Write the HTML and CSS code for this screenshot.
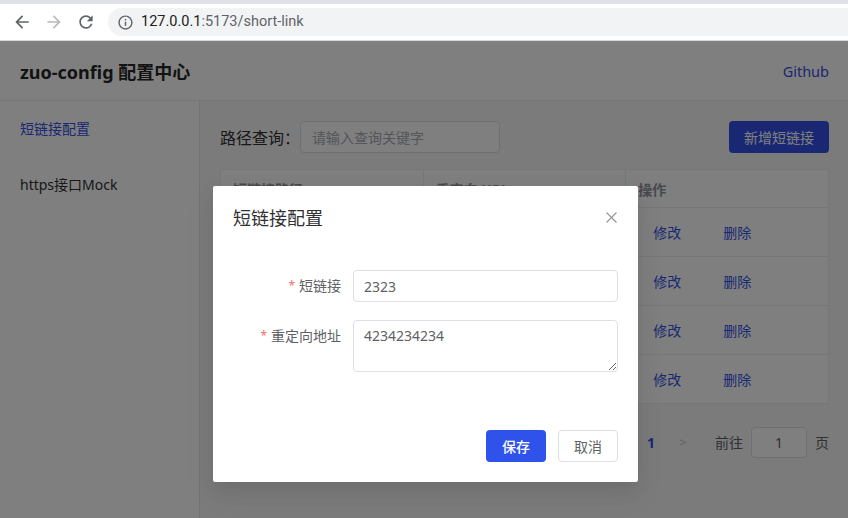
FILE: index.html
```html
<!DOCTYPE html>
<html lang="zh-CN">
<head>
<meta charset="utf-8">
<title>zuo-config</title>
<link rel="stylesheet" href="styles.css">
</head>
<body>
<div class="chrome">
  <div class="tabstrip"></div>
  <div class="toolbar">
    <span class="navbtn"><svg viewBox="0 0 24 24" width="20" height="20"><path fill="#5f6368" d="M20 11H7.83l5.59-5.59L12 4l-8 8 8 8 1.41-1.41L7.83 13H20v-2z"/></svg></span>
    <span class="navbtn"><svg viewBox="0 0 24 24" width="20" height="20"><path fill="#b9bbbe" d="M12 4l-1.41 1.41L16.17 11H4v2h12.17l-5.58 5.59L12 20l8-8z"/></svg></span>
    <span class="navbtn"><svg viewBox="0 0 24 24" width="20" height="20"><path fill="#5f6368" d="M17.65 6.35A7.958 7.958 0 0 0 12 4c-4.42 0-7.99 3.58-7.99 8s3.57 8 7.99 8c3.730 0 6.84-2.55 7.73-6h-2.08A5.99 5.99 0 0 1 12 18c-3.31 0-6-2.69-6-6s2.69-6 6-6c1.66 0 3.14.69 4.220 1.78L13 11h7V4l-2.35 2.35z"/></svg></span>
    <div class="omnibox">
      <svg class="info" viewBox="0 0 24 24" width="17" height="17"><path fill="#5f6368" d="M11 7h2v2h-2zm0 4h2v6h-2zm1-9C6.48 2 2 6.48 2 12s4.48 10 10 10 10-4.48 10-10S17.52 2 12 2zm0 18c-4.41 0-8-3.59-8-8s3.59-8 8-8 8 3.59 8 8-3.59 8-8 8z"/></svg>
      <span class="url"><span class="host">127.0.0.1</span>:5173/short-link</span>
    </div>
  </div>
</div>

<div class="app">
  <header class="topbar">
    <div class="brand">zuo-config 配置中心</div>
    <a class="gh">Github</a>
  </header>
  <div class="layout">
    <aside class="sidebar">
      <ul class="menu">
        <li class="menu-item active">短链接配置</li>
        <li class="menu-item">https接口Mock</li>
      </ul>
    </aside>
    <main class="main">
      <div class="search">
        <div class="search-left">
          <span class="search-label">路径查询：</span>
          <input class="search-input" type="text" placeholder="请输入查询关键字">
        </div>
        <button class="btn-primary">新增短链接</button>
      </div>
      <table class="table">
        <thead>
          <tr><th>短链接路径</th><th>重定向 URL</th><th>操作</th></tr>
        </thead>
        <tbody>
          <tr><td></td><td></td><td><span class="link">修改</span><span class="link">删除</span></td></tr>
          <tr><td></td><td></td><td><span class="link">修改</span><span class="link">删除</span></td></tr>
          <tr><td></td><td></td><td><span class="link">修改</span><span class="link">删除</span></td></tr>
          <tr><td></td><td></td><td><span class="link">修改</span><span class="link">删除</span></td></tr>
        </tbody>
      </table>
      <div class="pager">
        <span class="pager-num">1</span>
        <span class="pager-btn">&gt;</span>
        <span class="jumper">前往<span class="jump-input">1</span>页</span>
      </div>
    </main>
  </div>

  <div class="mask"></div>

  <div class="dialog">
    <div class="dialog-header">
      <span class="dialog-title">短链接配置</span>
      <svg class="dialog-close" viewBox="0 0 11 11" width="11" height="11"><path d="M0.5 0.5L10.5 10.5M10.5 0.5L0.5 10.5" stroke="#909399" stroke-width="1.1" fill="none"/></svg>
    </div>
    <div class="dialog-body">
      <div class="form-item">
        <label class="form-label"><span class="req">*</span>短链接</label>
        <input class="form-input" type="text" value="2323">
      </div>
      <div class="form-item">
        <label class="form-label"><span class="req">*</span>重定向地址</label>
        <textarea class="form-textarea">4234234234</textarea>
      </div>
    </div>
    <div class="dialog-footer">
      <button class="btn-save">保存</button>
      <button class="btn-cancel">取消</button>
    </div>
  </div>
</div>
</body>
</html>
```

FILE: styles.css
```css
* { box-sizing: border-box; }
html, body {
  margin: 0;
  padding: 0;
  width: 848px;
  height: 518px;
  overflow: hidden;
  background: #fff;
  font-family: "Noto Sans", "Noto Sans CJK SC", sans-serif;
}

/* browser chrome */
.chrome { height: 41px; background: #fff; }
.tabstrip { height: 4px; background: #dee1e6; }
.toolbar {
  height: 37px;
  display: flex;
  align-items: flex-start;
  padding-left: 6px;
  padding-top: 4px;
  border-bottom: 1px solid #d6d8db;
}
.navbtn {
  width: 32px;
  height: 28px;
  display: flex;
  align-items: center;
  justify-content: center;
}
.omnibox {
  margin-left: 6px;
  flex: 1;
  margin-right: -40px;
  height: 28px;
  border-radius: 14px;
  background: #f1f3f4;
  display: flex;
  align-items: center;
  padding-left: 9px;
}
.info { display: block; }
.url {
  margin-left: 7px;
  font-family: Roboto, "Noto Sans", sans-serif;
  font-size: 14.5px;
  color: #5f6368;
  line-height: 28px;
}
.host { color: #202124; }

/* app */
.app {
  position: relative;
  height: 477px;
  background: #fff;
  color: #303133;
}
.topbar {
  height: 60px;
  border-bottom: 1px solid #ebebeb;
  display: flex;
  align-items: center;
  justify-content: space-between;
  padding: 1px 19px 0 20px;
}
.brand {
  font-size: 18px;
  font-weight: 700;
  color: #262626;
}
.gh {
  font-size: 14.5px;
  color: #3b4de0;
}
.layout {
  display: flex;
  height: 417px;
}
.sidebar {
  width: 200px;
  border-right: 1px solid #e6e6e6;
  background: #fff;
}
.menu { list-style: none; margin: 0; padding: 0; }
.menu-item {
  height: 56px;
  line-height: 56px;
  padding-left: 20px;
  font-size: 14px;
  color: #303133;
}
.menu-item.active { color: #3451e6; }

.main {
  flex: 1;
  background: #f6f6f6;
  padding: 20px 19px 20px 20px;
}
.search {
  display: flex;
  justify-content: space-between;
  align-items: center;
  height: 32px;
}
.search-left { display: flex; align-items: center; }
.search-label {
  font-size: 16px;
  color: #303133;
  width: 80px;
}
.search-input {
  width: 200px;
  height: 32px;
  border: 1px solid #dcdfe6;
  border-radius: 4px;
  padding: 0 11px;
  font-family: inherit;
  font-size: 14px;
  background: #fff;
}
.search-input::placeholder { color: #a8abb2; }
.btn-primary {
  height: 32px;
  padding: 0 15px;
  border: none;
  border-radius: 4px;
  background: #3451e6;
  color: #fff;
  font-family: inherit;
  font-size: 14px;
}

.table {
  margin-top: 16px;
  width: 100%;
  border-collapse: collapse;
  table-layout: fixed;
  background: #fff;
  font-size: 14px;
}
.table th, .table td {
  border: 1px solid #ebeef5;
  text-align: left;
  padding: 0 12px;
}
.table th {
  height: 38px;
  color: #909399;
  font-weight: 700;
}
.table td {
  height: 49px;
  color: #606266;
}
.link {
  display: inline-block;
  padding: 0 15px;
  color: #3451e6;
}
.link + .link { margin-left: 12px; }

.pager {
  margin-top: 22px;
  display: flex;
  justify-content: flex-end;
  align-items: center;
  height: 32px;
  font-size: 14px;
  color: #606266;
}
.pager-btn {
  width: 32px;
  text-align: center;
  color: #c0c4cc;
  font-size: 13px;
}
.pager-num {
  width: 32px;
  text-align: center;
  color: #3451e6;
  font-weight: 700;
}
.jumper {
  margin-left: 16px;
  display: flex;
  align-items: center;
  color: #606266;
}
.jump-input {
  width: 56px;
  height: 31px;
  margin: 0 8px;
  border: 1px solid #dcdfe6;
  border-radius: 4px;
  text-align: center;
  line-height: 29px;
  background: #fff;
}

/* modal */
.mask {
  position: absolute;
  inset: 0;
  background: rgba(0, 0, 0, 0.5);
}
.dialog {
  position: absolute;
  top: 145px;
  left: 213px;
  width: 425px;
  background: #fff;
  border-radius: 2px;
  box-shadow: 0 12px 32px 4px rgba(0,0,0,.04), 0 8px 20px rgba(0,0,0,.08);
}
.dialog-header {
  position: relative;
  padding: 20px 20px 10px;
}
.dialog-title {
  display: block;
  font-size: 18px;
  line-height: 24px;
  color: #303133;
}
.dialog-close {
  position: absolute;
  top: 26px;
  right: 21px;
}
.dialog-body {
  padding: 30px 20px;
}
.form-item {
  display: flex;
  margin-bottom: 18px;
}
.form-label {
  width: 120px;
  padding-right: 12px;
  text-align: right;
  font-size: 14px;
  line-height: 32px;
  color: #606266;
}
.req {
  color: #f56c6c;
  margin-right: 4px;
  font-size: 12px;
  vertical-align: 1px;
}
.form-input {
  flex: 1;
  height: 32px;
  border: 1px solid #dcdfe6;
  border-radius: 4px;
  padding: 0 10px;
  font-family: inherit;
  font-size: 14px;
  color: #606266;
}
.form-textarea {
  flex: 1;
  height: 52px;
  border: 1px solid #dcdfe6;
  border-radius: 4px;
  padding: 4px 10px;
  font-family: inherit;
  font-size: 14px;
  line-height: 21px;
  color: #606266;
  resize: vertical;
}
.dialog-footer {
  padding: 10px 20px 20px;
  display: flex;
  justify-content: flex-end;
}
.btn-save, .btn-cancel {
  width: 60px;
  height: 32px;
  border-radius: 4px;
  font-family: inherit;
  font-size: 14px;
  padding: 0;
}
.btn-save {
  background: #2f52ea;
  border: none;
  color: #fff;
  font-weight: 500;
}
.btn-cancel {
  margin-left: 12px;
  background: #fff;
  border: 1px solid #dcdfe6;
  color: #606266;
}
```
